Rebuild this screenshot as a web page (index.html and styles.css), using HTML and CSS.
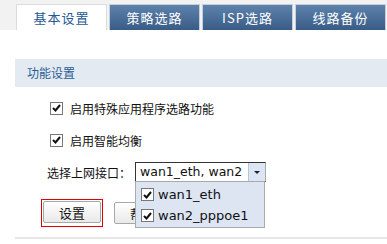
FILE: index.html
```html
<!DOCTYPE html>
<html lang="zh-CN">
<head>
    <meta charset="UTF-8">
    <title>负载均衡</title>
    <link rel="stylesheet" href="styles.css">
</head>
<body>
    <div class="tabbar">
        <div class="tab active">基本设置</div>
        <div class="tab">策略选路</div>
        <div class="tab">ISP选路</div>
        <div class="tab">线路备份</div>
    </div>

    <div class="panel">
        <div class="panel-title">功能设置</div>

        <div class="option">
            <span class="check"><svg width="9" height="8" viewBox="0 0 9 8"><path d="M1 4 L3.5 6.5 L8 1" fill="none" stroke="#111" stroke-width="2"/></svg></span>
            <span>启用特殊应用程序选路功能</span>
        </div>
        <div class="option">
            <span class="check"><svg width="9" height="8" viewBox="0 0 9 8"><path d="M1 4 L3.5 6.5 L8 1" fill="none" stroke="#111" stroke-width="2"/></svg></span>
            <span>启用智能均衡</span>
        </div>

        <div class="iface-row">
            <span class="iface-label">选择上网接口：</span>
            <div class="multi-select">
                <div class="select-box">
                    <span class="select-text">wan1_eth, wan2</span>
                    <span class="select-arrow"></span>
                </div>
                <div class="select-list">
                    <div class="select-item">
                        <span class="check"><svg width="9" height="8" viewBox="0 0 9 8"><path d="M1 4 L3.5 6.5 L8 1" fill="none" stroke="#111" stroke-width="2"/></svg></span>
                        <span>wan1_eth</span>
                    </div>
                    <div class="select-item">
                        <span class="check"><svg width="9" height="8" viewBox="0 0 9 8"><path d="M1 4 L3.5 6.5 L8 1" fill="none" stroke="#111" stroke-width="2"/></svg></span>
                        <span>wan2_pppoe1</span>
                    </div>
                </div>
            </div>
        </div>

        <div class="buttons">
            <div class="focus-ring"><button class="btn">设置</button></div>
            <button class="btn">帮助</button>
        </div>
    </div>
</body>
</html>
```

FILE: styles.css
```css
body {
    margin: 0;
    background-color: white;
    font-family: "Noto Sans CJK SC", "DejaVu Sans", sans-serif;
    font-size: 12px;
    color: #111;
}
.tabbar {
    background-color: #f2f2f2;
    height: 30px;
    padding-left: 16px;
    display: flex;
    align-items: flex-end;
    gap: 2px;
}
.tab {
    width: 89px;
    height: 25px;
    line-height: 25px;
    text-align: center;
    font-size: 13px;
    letter-spacing: 1px;
    color: white;
    background: linear-gradient(#5d82ab, #385c86);
    border: 1px solid #c5d0dc;
    border-bottom: none;
}
.tab.active {
    color: #1f5a94;
    background: white;
    border-color: #dcdcdc;
}
.panel {
    margin: 29px 0 0 15px;
    border-bottom: 2px solid #e6e6e6;
    padding-bottom: 10px;
}
.panel-title {
    background-color: #e3eaf2;
    height: 28px;
    line-height: 28px;
    padding-left: 12px;
    color: #2a5f94;
}
.option {
    display: flex;
    align-items: center;
    gap: 7px;
    margin-left: 35px;
    height: 16px;
    margin-top: 13px;
}
.option + .option {
    margin-top: 16px;
}
.check {
    width: 11px;
    height: 11px;
    border: 1px solid #777;
    background: white;
    display: inline-flex;
    align-items: center;
    justify-content: center;
}
.iface-row {
    display: flex;
    align-items: center;
    margin-top: 14px;
    margin-left: 32px;
    height: 20px;
}
.iface-label {
    width: 88px;
}
.multi-select {
    position: relative;
}
.select-box {
    width: 129px;
    height: 18px;
    border: 1px solid #333;
    border-right-color: #aaa;
    display: flex;
    background: white;
}
.select-text {
    flex: 1;
    padding-left: 4px;
    line-height: 18px;
    font-family: "DejaVu Sans", sans-serif;
    font-size: 12.5px;
    white-space: nowrap;
    overflow: hidden;
}
.select-arrow {
    width: 16px;
    background: #dbe5f3;
    border-left: 1px solid #b5c5da;
    position: relative;
}
.select-arrow::after {
    content: "";
    position: absolute;
    left: 5px;
    top: 8px;
    border-left: 3px solid transparent;
    border-right: 3px solid transparent;
    border-top: 3px solid #222;
}
.select-list {
    position: absolute;
    left: 0;
    top: 19px;
    width: 130px;
    height: 47px;
    background: #dde5f3;
    border: 1px solid #a9a9a9;
    padding-top: 2px;
    box-sizing: border-box;
}
.select-item {
    display: flex;
    align-items: center;
    gap: 4px;
    height: 21px;
    padding-left: 5px;
    font-family: "DejaVu Sans", sans-serif;
    font-size: 13px;
}
.buttons {
    display: flex;
    align-items: center;
    gap: 11px;
    margin-top: 17px;
    margin-left: 26px;
}
.focus-ring {
    border: 1px solid #e00000;
    padding: 1px 1px 3px 1px;
}
.btn {
    width: 58px;
    height: 22px;
    font-family: "Noto Sans CJK SC", sans-serif;
    font-size: 13px;
    padding: 0;
    background: linear-gradient(#ffffff, #e9e9e9);
    border: 1px solid #a8a8a8;
    border-radius: 2px;
    color: #111;
}
```
